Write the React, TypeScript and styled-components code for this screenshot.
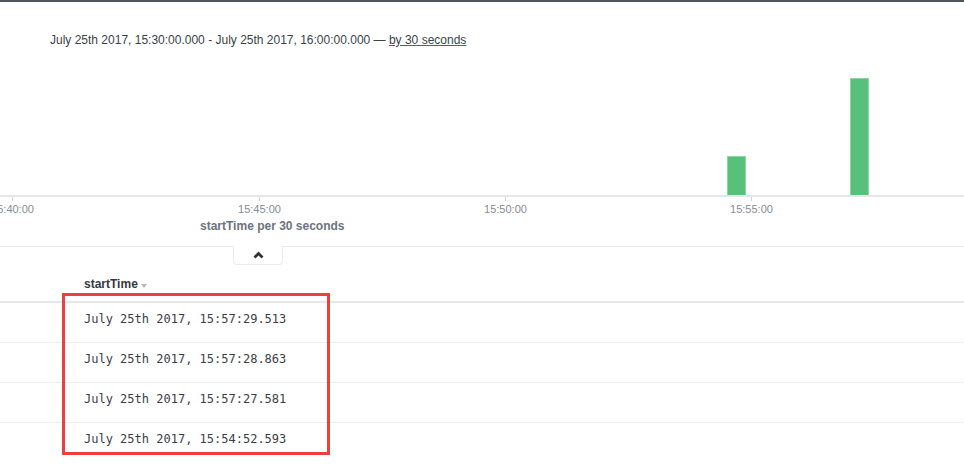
import React from "react";
import styled, { createGlobalStyle } from "styled-components";

const GlobalStyle = createGlobalStyle`
  html, body { margin: 0; padding: 0; background: #ffffff; }
  body { font-family: "Liberation Sans", Arial, sans-serif; overflow: hidden; }
`;

const Page = styled.div`
  width: 964px;
  height: 469px;
  display: flex;
  flex-direction: column;
  background: #fff;
  overflow: hidden;
`;

const TopBar = styled.div`
  height: 2px;
  background: #50545e;
  flex: none;
`;

const RangeLine = styled.div`
  padding: 31px 0 0 50px;
  font-size: 12px;
  line-height: 14px;
  color: #3b3f47;
  white-space: nowrap;
`;

const IntervalLink = styled.a`
  color: #3b3f47;
  text-decoration: underline;
  text-decoration-color: #2f6f84;
  cursor: pointer;
`;

const ChartSvg = styled.svg`
  display: block;
  margin-top: 13px;
  flex: none;
`;

const AxisTitle = styled.div`
  padding-left: 200px;
  font-size: 12px;
  line-height: 14px;
  font-weight: bold;
  color: #6c737d;
`;

const Divider = styled.div`
  margin-top: 13px;
  border-top: 1px solid #e9ebee;
  display: flex;
`;

const ToggleTab = styled.div`
  margin-left: 233px;
  margin-top: -1px;
  width: 48px;
  height: 18px;
  background: #fff;
  border: 1px solid #e9ebee;
  border-top: none;
  border-radius: 0 0 4px 4px;
  display: flex;
  align-items: center;
  justify-content: center;
`;

const TableWrap = styled.div`
  position: relative;
  margin-top: 12px;
`;

const HeaderRow = styled.div`
  display: flex;
  border-bottom: 2px solid #e6e8eb;
  padding-bottom: 10px;
`;

const Row = styled.div<{ $last?: boolean }>`
  display: flex;
  height: 39px;
  border-bottom: 1px solid ${(p) => (p.$last ? "transparent" : "#eceef0")};
  box-sizing: content-box;
`;

const Gutter = styled.div`
  width: 84px;
  flex: none;
`;

const HeaderCell = styled.div`
  font-size: 12px;
  line-height: 14px;
  font-weight: bold;
  color: #343741;
  display: flex;
  align-items: center;
`;

const SortCaret = styled.span`
  display: inline-block;
  margin-left: 3px;
  margin-top: 3px;
  width: 0;
  height: 0;
  border-left: 3.5px solid transparent;
  border-right: 3.5px solid transparent;
  border-top: 4px solid #b4b8be;
`;

const TimeCell = styled.div`
  padding-top: 8px;
  font-family: "DejaVu Sans Mono", "Liberation Mono", monospace;
  font-size: 12px;
  line-height: 16px;
  color: #3a3e46;
  white-space: nowrap;
`;

const Highlight = styled.div`
  position: absolute;
  left: 62px;
  top: 16px;
  width: 268px;
  height: 162px;
  box-sizing: border-box;
  border: 3px solid #ef3e3e;
  pointer-events: none;
`;

const ticks = [
  { x: 12, label: "15:40:00" },
  { x: 259, label: "15:45:00" },
  { x: 505, label: "15:50:00" },
  { x: 751, label: "15:55:00" },
];

const bars = [
  { x: 727, top: 96 },
  { x: 850, top: 18 },
];

const rows = [
  "July 25th 2017, 15:57:29.513",
  "July 25th 2017, 15:57:28.863",
  "July 25th 2017, 15:57:27.581",
  "July 25th 2017, 15:54:52.593",
];

export default function App() {
  return (
    <Page>
      <GlobalStyle />
      <TopBar />
      <RangeLine>
        July 25th 2017, 15:30:00.000 - July 25th 2017, 16:00:00.000 —{" "}
        <IntervalLink>by 30 seconds</IntervalLink>
      </RangeLine>
      <ChartSvg width={964} height={159} viewBox="0 0 964 159">
        {bars.map((b) => (
          <rect
            key={b.x}
            x={b.x + 0.5}
            y={b.top + 0.5}
            width={18}
            height={135 - b.top}
            fill="#57c17b"
            stroke="#8fd4a5"
            strokeWidth={1}
          />
        ))}
        <rect x={0} y={135} width={964} height={2} fill="#e6e6e6" />
        {ticks.map((t) => (
          <g key={t.x}>
            <line x1={t.x + 0.5} x2={t.x + 0.5} y1={137} y2={141} stroke="#cfd2d6" strokeWidth={1} />
            <text
              x={t.x + 0.5}
              y={153}
              textAnchor="middle"
              fontFamily="'Liberation Sans', Arial, sans-serif"
              fontSize={11}
              fill="#858c95"
            >
              {t.label}
            </text>
          </g>
        ))}
      </ChartSvg>
      <AxisTitle>startTime per 30 seconds</AxisTitle>
      <Divider>
        <ToggleTab>
          <svg width="11" height="8" viewBox="0 0 11 8">
            <polyline
              points="1.5,6.5 5.5,2.5 9.5,6.5"
              fill="none"
              stroke="#2f333b"
              strokeWidth={2.8}
              strokeLinecap="butt"
              strokeLinejoin="miter"
            />
          </svg>
        </ToggleTab>
      </Divider>
      <TableWrap>
        <HeaderRow>
          <Gutter />
          <HeaderCell>
            startTime
            <SortCaret />
          </HeaderCell>
        </HeaderRow>
        {rows.map((r, i) => (
          <Row key={r} $last={i === rows.length - 1}>
            <Gutter />
            <TimeCell>{r}</TimeCell>
          </Row>
        ))}
        <Highlight />
      </TableWrap>
    </Page>
  );
}
